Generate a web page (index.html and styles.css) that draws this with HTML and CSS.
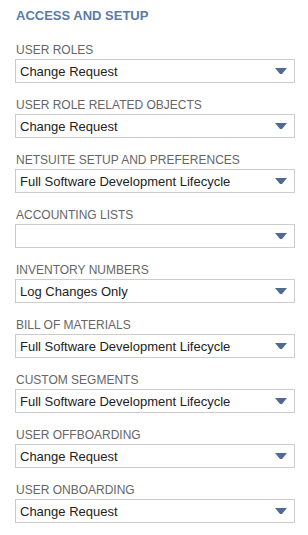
FILE: index.html
```html
<!DOCTYPE html>
<html lang="en">
<head>
  <meta charset="UTF-8">
  <title>Access and Setup</title>
  <link rel="stylesheet" href="styles.css">
</head>
<body>
  <div class="section">
    <h2 class="section-title">ACCESS AND SETUP</h2>

    <div class="field">
      <label class="field-label">USER ROLES</label>
      <div class="dropdown"><span class="dropdown-value">Change Request</span><span class="arrow"></span></div>
    </div>

    <div class="field">
      <label class="field-label">USER ROLE RELATED OBJECTS</label>
      <div class="dropdown"><span class="dropdown-value">Change Request</span><span class="arrow"></span></div>
    </div>

    <div class="field">
      <label class="field-label">NETSUITE SETUP AND PREFERENCES</label>
      <div class="dropdown"><span class="dropdown-value">Full Software Development Lifecycle</span><span class="arrow"></span></div>
    </div>

    <div class="field">
      <label class="field-label">ACCOUNTING LISTS</label>
      <div class="dropdown"><span class="dropdown-value"></span><span class="arrow"></span></div>
    </div>

    <div class="field">
      <label class="field-label">INVENTORY NUMBERS</label>
      <div class="dropdown"><span class="dropdown-value">Log Changes Only</span><span class="arrow"></span></div>
    </div>

    <div class="field">
      <label class="field-label">BILL OF MATERIALS</label>
      <div class="dropdown"><span class="dropdown-value">Full Software Development Lifecycle</span><span class="arrow"></span></div>
    </div>

    <div class="field">
      <label class="field-label">CUSTOM SEGMENTS</label>
      <div class="dropdown"><span class="dropdown-value">Full Software Development Lifecycle</span><span class="arrow"></span></div>
    </div>

    <div class="field">
      <label class="field-label">USER OFFBOARDING</label>
      <div class="dropdown"><span class="dropdown-value">Change Request</span><span class="arrow"></span></div>
    </div>

    <div class="field">
      <label class="field-label">USER ONBOARDING</label>
      <div class="dropdown"><span class="dropdown-value">Change Request</span><span class="arrow"></span></div>
    </div>
  </div>
</body>
</html>
```

FILE: styles.css
```css
body {
  margin: 0;
  background: #fff;
  font-family: "Liberation Sans", Arial, sans-serif;
}
.section {
  padding: 8px 13px 0 15px;
}
.section-title {
  margin: 0 0 19px 1px;
  font-size: 13px;
  line-height: 16px;
  font-weight: bold;
  color: #5a7aa8;
}
.field {
  margin-bottom: 15px;
}
.field-label {
  display: block;
  margin-left: 1px;
  font-size: 12px;
  line-height: 14px;
  color: #666;
}
.dropdown {
  margin-top: 2px;
  height: 22px;
  border: 1px solid #ccc;
  display: flex;
  align-items: center;
  justify-content: space-between;
  padding: 0 7px 0 4px;
}
.dropdown-value {
  font-size: 13px;
  color: #222;
}
/* small trapezoid-ish arrow, like the netsuite select */
.arrow {
  width: 2px;
  height: 0;
  border-left: 5px solid transparent;
  border-right: 5px solid transparent;
  border-top: 6px solid #4f6b94;
}
```
